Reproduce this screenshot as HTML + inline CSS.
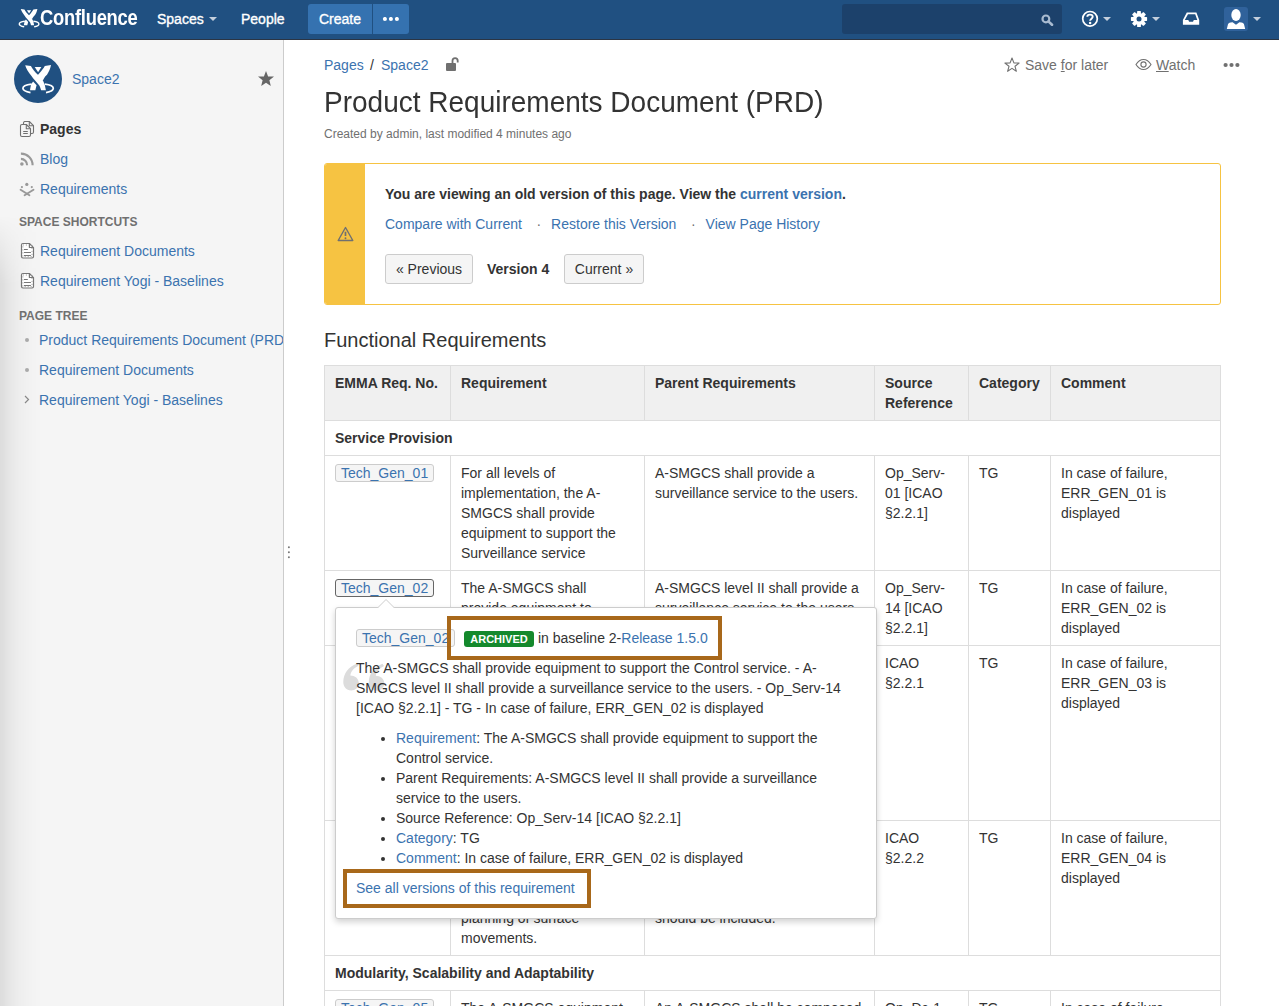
<!DOCTYPE html>
<html><head><meta charset="utf-8">
<style>
*{box-sizing:border-box}
html,body{margin:0;padding:0;width:1279px;height:1006px;overflow:hidden;background:#fff;font-family:"Liberation Sans",sans-serif;font-size:14px;line-height:20px;color:#333}
a{color:#3b73af;text-decoration:none}
.abs{position:absolute}
#hdr{position:absolute;left:0;top:0;width:1279px;height:40px;background:#205081;border-bottom:1px solid #2b3544}
#hdr .nav{position:absolute;top:9px;color:#fff;font-size:14px;line-height:20px;-webkit-text-stroke:0.35px #fff}
#sidebar{position:absolute;left:0;top:40px;width:284px;height:966px;background:#f5f5f5;border-right:1px solid #ccc;overflow:hidden}
#sideshadow{position:absolute;left:0;top:175px;width:42px;height:791px;background:linear-gradient(to right,rgba(0,0,0,0.1) 0,rgba(0,0,0,0.055) 10px,rgba(0,0,0,0.028) 20px,rgba(0,0,0,0.012) 30px,rgba(0,0,0,0) 42px);-webkit-mask-image:linear-gradient(to bottom,transparent,#000 70px)}
.side-item{position:absolute;left:40px;white-space:nowrap}
.side-h{position:absolute;left:19px;font-size:12px;font-weight:bold;color:#707070;line-height:16px}
#main{position:absolute;left:324px;top:40px;width:955px}
table.req{position:absolute;left:324px;top:365px;width:896px;border-collapse:collapse;table-layout:fixed}
table.req td,table.req th{border:1px solid #ddd;padding:7px 10px;vertical-align:top;text-align:left}
table.req th{background:#f0f0f0;font-weight:bold}
.btn{height:30px;border:1px solid #ccc;background:#f5f5f5;border-radius:3px;line-height:28px;text-align:center;color:#333}
.rq{display:inline-block;border:1px solid #ccc;background:#f5f5f5;border-radius:3px;line-height:16px;padding:0 5px;color:#3b73af}
.rq.act{border-color:#666}
</style></head><body>
<div id="hdr">
  <svg class="abs" style="left:0;top:0" width="50" height="40" viewBox="0 0 50 40"><g transform="translate(13.54,2.45) scale(0.645)"><path d="M11.2 10.2 L16.9 11.1 C18.5 14 21 17.5 23.9 19.7 L28.4 24.8 C29.5 26.5 30.3 28.5 30.8 30 L31.9 35.2 L27.1 35.2 C26.4 32.5 25.7 30.8 24.9 29.9 C22 26.5 19.5 24 17.5 21 C14.5 17 12 13.5 11.2 10.2 Z M37 10 C36.3 14 34.8 17 33 19.7 C32 20.5 30.5 22 29 25.3 L23.9 21 L23.4 20.5 L27.1 16.2 C28 15 29.5 13.5 30.8 11.1 Z" fill="#fff"/>
<path d="M19.1 26.4 L22.6 30.3 L21.3 35.2 L16 35.2 L17 29.6 Z" fill="#fff"/>
<path d="M20.7 11.9 L27.4 11.9 L24.1 17.2 Z" fill="#fff"/>
<path d="M17.5 29.2 C11 30 8.9 31.8 8.9 33.3 C8.9 35.2 12 36.8 16.5 37.6" stroke="#fff" stroke-width="2.2" fill="none"/>
<path d="M30.8 29.2 C37 30 39.3 31.8 39.3 33.3 C39.3 35.2 36.5 36.8 32 37.6" stroke="#fff" stroke-width="2.2" fill="none"/></g></svg>
  <div class="abs" style="left:40px;top:4px;font-size:22px;font-weight:bold;color:#fff;line-height:28px;transform:scaleX(0.835);transform-origin:0 0;letter-spacing:-0.3px">Confluence</div>
  <div class="nav" style="left:157px">Spaces</div>
  <svg class="abs" style="left:209px;top:17px" width="8" height="4"><path d="M0 0 L8 0 L4 4Z" fill="#c4cfdd"/></svg>
  <div class="nav" style="left:241px">People</div>
  <div class="abs" style="left:308px;top:4px;width:64px;height:30px;background:#3572b0;border-radius:3px 0 0 3px;color:#fff;text-align:center;line-height:30px;-webkit-text-stroke:0.35px #fff">Create</div>
  <div class="abs" style="left:373px;top:4px;width:36px;height:30px;background:#3572b0;border-radius:0 3px 3px 0">
    <svg class="abs" style="left:9px;top:13px" width="18" height="5"><circle cx="2.9" cy="2" r="2.05" fill="#fff"/><circle cx="8.9" cy="2" r="2.05" fill="#fff"/><circle cx="14.9" cy="2" r="2.05" fill="#fff"/></svg>
  </div>
  <div class="abs" style="left:842px;top:4px;width:220px;height:30px;background:#1c416b;border-radius:3px">
    <svg class="abs" style="left:199px;top:10px" width="13" height="12" viewBox="0 0 13 12"><circle cx="4.9" cy="4.9" r="3.4" stroke="#a9bbd0" stroke-width="2.2" fill="none"/><path d="M7.4 7.4 L11 10.8" stroke="#a9bbd0" stroke-width="2.6" stroke-linecap="round"/></svg>
  </div>
  <svg class="abs" style="left:1081px;top:10px" width="18" height="18" viewBox="0 0 18 18"><circle cx="9" cy="8.8" r="7.3" stroke="#fff" stroke-width="1.7" fill="none"/><path d="M6.3 6.8 C6.3 3.9 11.7 3.9 11.7 6.8 C11.7 8.6 9.1 8.7 9.1 10.8" stroke="#fff" stroke-width="1.9" fill="none"/><circle cx="9.1" cy="13.1" r="1.25" fill="#fff"/></svg>
  <svg class="abs" style="left:1103px;top:17px" width="8" height="4"><path d="M0 0 L8 0 L4 4Z" fill="#c4cfdd"/></svg>
  <svg class="abs" style="left:1130px;top:10px" width="18" height="18" viewBox="0 0 18 18"><g transform="translate(9,9)" fill="#fff"><circle r="6"/><rect x="-1.9" y="-8.1" width="3.8" height="4" rx="0.6" transform="rotate(0)"/><rect x="-1.9" y="-8.1" width="3.8" height="4" rx="0.6" transform="rotate(45)"/><rect x="-1.9" y="-8.1" width="3.8" height="4" rx="0.6" transform="rotate(90)"/><rect x="-1.9" y="-8.1" width="3.8" height="4" rx="0.6" transform="rotate(135)"/><rect x="-1.9" y="-8.1" width="3.8" height="4" rx="0.6" transform="rotate(180)"/><rect x="-1.9" y="-8.1" width="3.8" height="4" rx="0.6" transform="rotate(225)"/><rect x="-1.9" y="-8.1" width="3.8" height="4" rx="0.6" transform="rotate(270)"/><rect x="-1.9" y="-8.1" width="3.8" height="4" rx="0.6" transform="rotate(315)"/></g><circle cx="9" cy="9" r="2.5" fill="#205081"/></svg>
  <svg class="abs" style="left:1152px;top:17px" width="8" height="4"><path d="M0 0 L8 0 L4 4Z" fill="#c4cfdd"/></svg>
  <svg class="abs" style="left:1182px;top:12px" width="18" height="14" viewBox="0 0 18 14"><path d="M4.8 0.6 L14.4 0.6 L17.2 8 L17.2 12.8 L0.9 12.8 L0.9 8 Z M6 2.3 L13.2 2.3 L15.3 8 L11.8 8 L11 9.8 L7.1 9.8 L6.3 8 L2.8 8 Z" fill="#fff" fill-rule="evenodd"/></svg>
  <div class="abs" style="left:1224px;top:7px;width:24px;height:24px;background:#30629b;border-radius:3px;overflow:hidden"><svg class="abs" style="left:0;top:0" width="24" height="24" viewBox="0 0 24 24"><ellipse cx="12" cy="8" rx="4.7" ry="6.1" fill="#fff"/><path d="M2.8 22 L4 17.2 Q4.6 15.6 6.5 15.4 L8.6 15.2 L12 17.8 L15.4 15.2 L17.5 15.4 Q19.4 15.6 20 17.2 L21.2 22 Z" fill="#fff"/></svg></div>
  <svg class="abs" style="left:1253px;top:17px" width="8" height="4"><path d="M0 0 L8 0 L4 4Z" fill="#c4cfdd"/></svg>
</div>
<div id="sidebar">
  <div id="sideshadow"></div>
  <div class="abs" style="left:14px;top:15px;width:48px;height:48px;border-radius:50%;background:#205081">
    <svg class="abs" style="left:0;top:0" width="48" height="48" viewBox="0 0 48 48"><path d="M11.2 10.2 L16.9 11.1 C18.5 14 21 17.5 23.9 19.7 L28.4 24.8 C29.5 26.5 30.3 28.5 30.8 30 L31.9 35.2 L27.1 35.2 C26.4 32.5 25.7 30.8 24.9 29.9 C22 26.5 19.5 24 17.5 21 C14.5 17 12 13.5 11.2 10.2 Z M37 10 C36.3 14 34.8 17 33 19.7 C32 20.5 30.5 22 29 25.3 L23.9 21 L23.4 20.5 L27.1 16.2 C28 15 29.5 13.5 30.8 11.1 Z" fill="#fff"/>
<path d="M19.1 26.4 L22.6 30.3 L21.3 35.2 L16 35.2 L17 29.6 Z" fill="#fff"/>
<path d="M20.7 11.9 L27.4 11.9 L24.1 17.2 Z" fill="#fff"/>
<path d="M17.5 29.2 C11 30 8.9 31.8 8.9 33.3 C8.9 35.2 12 36.8 16.5 37.6" stroke="#fff" stroke-width="1.7" fill="none"/>
<path d="M30.8 29.2 C37 30 39.3 31.8 39.3 33.3 C39.3 35.2 36.5 36.8 32 37.6" stroke="#fff" stroke-width="1.7" fill="none"/></svg>
  </div>
  <a class="abs" style="left:72px;top:29px">Space2</a>
  <svg class="abs" style="left:258px;top:31px" width="16" height="15" viewBox="0 0 16 15"><path d="M8 0.1 L10.1 5.4 L16 5.6 L11.4 9.3 L12.8 15 L8 11.8 L3.2 15 L4.6 9.3 L0 5.6 L5.9 5.4 Z" fill="#666"/></svg>
  <svg class="abs" style="left:19px;top:81px" width="17" height="17" viewBox="0 0 17 17"><g stroke="#707070" stroke-width="1.1" fill="none" stroke-linejoin="round"><path d="M4.5 3.5 L4.5 2 Q4.5 0.5 6 0.5 L10.3 0.5 L14.5 4.7 L14.5 11 Q14.5 12.5 13 12.5 L11.5 12.5"/><path d="M10.3 0.5 L10.3 4.7 L14.5 4.7"/><path d="M3 3.5 L7.3 3.5 L11.5 7.7 L11.5 14 Q11.5 15.5 10 15.5 L3 15.5 Q1.5 15.5 1.5 14 L1.5 5 Q1.5 3.5 3 3.5 Z" fill="#f5f5f5"/><path d="M7.3 3.5 L7.3 7.7 L11.5 7.7"/><path d="M4.2 10.5 L8.8 10.5 M4.2 12.5 L8.8 12.5"/></g></svg>
  <div class="side-item" style="top:79px;font-weight:bold;color:#333">Pages</div>
  <svg class="abs" style="left:20px;top:112px" width="14" height="14" viewBox="0 0 14 14"><circle cx="1.9" cy="12" r="1.8" fill="#999"/><path d="M0.9 6.9 A6.2 6.2 0 0 1 7.1 13.2" stroke="#999" stroke-width="2.1" fill="none"/><path d="M0.9 1.6 A11.5 11.5 0 0 1 12.6 13.3" stroke="#999" stroke-width="2.1" fill="none"/></svg>
  <a class="side-item" style="top:109px">Blog</a>
  <svg class="abs" style="left:19px;top:141px" width="17" height="17" viewBox="0 0 17 17"><circle cx="7.8" cy="3.4" r="1.6" fill="#999"/><circle cx="2.9" cy="6.1" r="1.1" fill="#999"/><circle cx="12.8" cy="6.1" r="1.1" fill="#999"/><path d="M1.6 8.7 L10.4 14.3 M14.5 8.7 L5.6 14.3" stroke="#999" stroke-width="1.9" stroke-linecap="round" fill="none"/></svg>
  <a class="side-item" style="top:139px">Requirements</a>
  <div class="side-h" style="top:174px">SPACE SHORTCUTS</div>
  <svg class="abs" style="left:20px;top:202px" width="16" height="18" viewBox="0 0 16 18"><g fill="none" stroke-linejoin="round"><path d="M2.8 1.5 L9.4 1.5 L13.5 5.6 L13.5 14.6 Q13.5 16 12.1 16 L2.9 16 Q1.5 16 1.5 14.6 L1.5 2.9 Q1.5 1.5 2.8 1.5 Z" stroke="#777" stroke-width="1.2" fill="#fff"/><path d="M2.9 3 L12 3 L12 14.6 L2.9 14.6 Z" stroke="#999" stroke-width="1" stroke-dasharray="1 2"/><path d="M9.4 1.5 L9.4 5.5 L13.5 5.5" stroke="#777" stroke-width="1.2"/><path d="M4 7.5 L7.8 7.5 M4 10.5 L10.9 10.5 M4 13.5 L10.9 13.5" stroke="#777" stroke-width="1.1"/></g></svg>
  <a class="side-item" style="top:201px">Requirement Documents</a>
  <svg class="abs" style="left:20px;top:232px" width="16" height="18" viewBox="0 0 16 18"><g fill="none" stroke-linejoin="round"><path d="M2.8 1.5 L9.4 1.5 L13.5 5.6 L13.5 14.6 Q13.5 16 12.1 16 L2.9 16 Q1.5 16 1.5 14.6 L1.5 2.9 Q1.5 1.5 2.8 1.5 Z" stroke="#777" stroke-width="1.2" fill="#fff"/><path d="M2.9 3 L12 3 L12 14.6 L2.9 14.6 Z" stroke="#999" stroke-width="1" stroke-dasharray="1 2"/><path d="M9.4 1.5 L9.4 5.5 L13.5 5.5" stroke="#777" stroke-width="1.2"/><path d="M4 7.5 L7.8 7.5 M4 10.5 L10.9 10.5 M4 13.5 L10.9 13.5" stroke="#777" stroke-width="1.1"/></g></svg>
  <a class="side-item" style="top:231px">Requirement Yogi - Baselines</a>
  <div class="side-h" style="top:268px">PAGE TREE</div>
  <div class="abs" style="left:25px;top:298px;width:4px;height:4px;border-radius:50%;background:#aaa"></div>
  <a class="side-item" style="top:290px;left:39px">Product Requirements Document (PRD)</a>
  <div class="abs" style="left:25px;top:328px;width:4px;height:4px;border-radius:50%;background:#aaa"></div>
  <a class="side-item" style="top:320px;left:39px">Requirement Documents</a>
  <svg class="abs" style="left:24px;top:355px" width="6" height="9"><path d="M1 1 L4.5 4.5 L1 8" stroke="#888" stroke-width="1.2" fill="none"/></svg>
  <a class="side-item" style="top:350px;left:39px">Requirement Yogi - Baselines</a>
</div>
<svg class="abs" style="left:287px;top:545px" width="4" height="15"><circle cx="1.9" cy="2.3" r="1" fill="#777"/><circle cx="1.9" cy="7.3" r="1" fill="#777"/><circle cx="1.9" cy="12.3" r="1" fill="#777"/></svg>

<a class="abs" style="left:324px;top:55px">Pages</a>
<span class="abs" style="left:370px;top:55px">/</span>
<a class="abs" style="left:381px;top:55px">Space2</a>

<h1 class="abs" style="margin:0;left:324px;top:86px;font-size:28px;line-height:32px;font-weight:normal;color:#333;transform:scaleY(1.06);transform-origin:0 5.6px">Product Requirements Document (PRD)</h1>
<div class="abs" style="left:324px;top:126px;font-size:12px;line-height:16px;color:#707070">Created by admin, last modified 4 minutes ago</div>

<svg class="abs" style="left:445px;top:56px" width="14" height="16" viewBox="0 0 14 16"><path d="M7.5 7.5 L7.5 4.8 A2.6 2.6 0 0 1 12.7 4.8 L12.7 6.5" stroke="#707070" stroke-width="1.8" fill="none"/><rect x="1" y="7" width="10" height="8" rx="1" fill="#707070"/></svg>

<svg class="abs" style="left:1004px;top:57px" width="16" height="15" viewBox="0 0 16 15"><path d="M8 1 L9.9 5.9 L15.1 6.1 L11 9.3 L12.4 14.3 L8 11.4 L3.6 14.3 L5 9.3 L0.9 6.1 L6.1 5.9 Z" stroke="#707070" stroke-width="1.1" fill="none" stroke-linejoin="round"/></svg>
<span class="abs" style="left:1025px;top:55px;color:#707070;white-space:nowrap">Save <span style="text-decoration:underline">f</span>or later</span>
<svg class="abs" style="left:1135px;top:58px" width="17" height="13" viewBox="0 0 17 13"><path d="M1 6.5 C3.5 2.5 6 1.5 8.5 1.5 C11 1.5 13.5 2.5 16 6.5 C13.5 10.5 11 11.5 8.5 11.5 C6 11.5 3.5 10.5 1 6.5 Z" stroke="#707070" stroke-width="1.1" fill="none"/><circle cx="8.5" cy="6.5" r="2.6" stroke="#707070" stroke-width="1.1" fill="none"/></svg>
<span class="abs" style="left:1156px;top:55px;color:#707070;white-space:nowrap"><span style="text-decoration:underline">W</span>atch</span>
<svg class="abs" style="left:1223px;top:62px" width="17" height="6"><circle cx="2.6" cy="3" r="2.1" fill="#707070"/><circle cx="8.5" cy="3" r="2.1" fill="#707070"/><circle cx="14.4" cy="3" r="2.1" fill="#707070"/></svg>

<div class="abs" style="left:324px;top:163px;width:897px;height:142px;border:1px solid #f6c342;border-radius:3px;overflow:hidden">
  <div class="abs" style="left:0;top:0;width:40px;height:140px;background:#f6c342"></div>
  <svg class="abs" style="left:12px;top:62px" width="17" height="16" viewBox="0 0 17 16"><path d="M8.5 1.5 L15.8 14.5 L1.2 14.5 Z" stroke="#707070" stroke-width="1.4" fill="none" stroke-linejoin="round"/><path d="M8.5 5.8 L8.5 10" stroke="#707070" stroke-width="1.7"/><circle cx="8.5" cy="12.2" r="0.95" fill="#707070"/></svg>
  <div class="abs" style="left:60px;top:20px;font-weight:bold;white-space:nowrap">You are viewing an old version of this page. View the <a>current version</a>.</div>
  <div class="abs" style="left:60px;top:50px;white-space:nowrap"><a>Compare with Current</a><span style="margin:0 10px 0 14.5px;color:#707070">&middot;</span><a>Restore this Version</a><span style="margin:0 10px 0 14.5px;color:#707070">&middot;</span><a>View Page History</a></div>
  <div class="abs btn" style="left:60px;top:90px;width:88px">&laquo; Previous</div>
  <div class="abs" style="left:162px;top:95px;font-weight:bold">Version 4</div>
  <div class="abs btn" style="left:239px;top:90px;width:80px">Current &raquo;</div>
</div>

<h2 class="abs" style="margin:0;left:324px;top:325.5px;font-size:20px;line-height:28px;font-weight:normal;color:#333">Functional Requirements</h2>


<table class="req">
<colgroup><col style="width:126px"><col style="width:194px"><col style="width:230px"><col style="width:94px"><col style="width:82px"><col style="width:170px"></colgroup>
<tr><th>EMMA Req. No.</th><th>Requirement</th><th>Parent Requirements</th><th>Source<br>Reference</th><th>Category</th><th>Comment</th></tr>
<tr><td colspan="6" style="font-weight:bold">Service Provision</td></tr>
<tr><td><span class="rq">Tech_Gen_01</span></td><td>For all levels of<br>implementation, the A-<br>SMGCS shall provide<br>equipment to support the<br>Surveillance service</td><td>A-SMGCS shall provide a<br>surveillance service to the users.</td><td>Op_Serv-<br>01 [ICAO<br>&sect;2.2.1]</td><td>TG</td><td>In case of failure,<br>ERR_GEN_01 is<br>displayed</td></tr>
<tr><td><span class="rq act">Tech_Gen_02</span></td><td>The A-SMGCS shall<br>provide equipment to<br>support the Control service.</td><td>A-SMGCS level II shall provide a<br>surveillance service to the users.</td><td>Op_Serv-<br>14 [ICAO<br>&sect;2.2.1]</td><td>TG</td><td>In case of failure,<br>ERR_GEN_02 is<br>displayed</td></tr>
<tr><td><span class="rq">Tech_Gen_03</span></td><td>The A-SMGCS shall<br>provide equipment to<br>support the Guidance<br>service.<br>&nbsp;<br>&nbsp;<br>&nbsp;<br>&nbsp;</td><td>A-SMGCS shall provide<br>guidance to the users.</td><td>ICAO<br>&sect;2.2.1</td><td>TG</td><td>In case of failure,<br>ERR_GEN_03 is<br>displayed</td></tr>
<tr><td><span class="rq">Tech_Gen_04</span></td><td>The A-SMGCS shall<br>provide equipment to<br>support the Planning<br>service for the<br>planning of surface<br>movements.</td><td>A-SMGCS shall provide a<br>planning service to the<br>users. Automated<br>planning functions<br>should be included.</td><td>ICAO<br>&sect;2.2.2</td><td>TG</td><td>In case of failure,<br>ERR_GEN_04 is<br>displayed</td></tr>
<tr><td colspan="6" style="font-weight:bold">Modularity, Scalability and Adaptability</td></tr>
<tr><td><span class="rq">Tech_Gen_05</span></td><td>The A-SMGCS equipment<br>shall be modular.</td><td>An A-SMGCS shall be composed<br>of modules.</td><td>Op_Dc-1<br>[ICAO]</td><td>TG</td><td>In case of failure,<br>ERR_GEN_05 is<br>displayed</td></tr>
</table>


<div id="popup" class="abs" style="left:335px;top:607px;width:542px;height:312px;background:#fff;border:1px solid #ccc;border-radius:3px;box-shadow:0 3px 6px rgba(0,0,0,0.18)">
  <svg class="abs" style="left:41px;top:-9px" width="18" height="10" viewBox="0 0 18 10"><path d="M0 9.5 L9 0.5 L18 9.5" fill="#fff" stroke="#ccc" stroke-width="1"/><rect x="0" y="9" width="18" height="2" fill="#fff"/></svg>
  <div class="abs" style="left:0px;top:0px;width:540px">
    <span class="abs rq" style="left:20px;top:21px;">Tech_Gen_02</span>
    <span class="abs" style="left:128px;top:23px;width:70px;height:16px;background:#14892c;border-radius:3px;color:#fff;font-size:11px;font-weight:bold;line-height:16px;text-align:center">ARCHIVED</span>
    <span class="abs" style="left:202px;top:20px;white-space:nowrap">in baseline 2-<a>Release 1.5.0</a></span>
    <div class="abs" style="left:111px;top:8px;width:275px;height:43.5px;border:4px solid #a8681a"></div>
    <svg class="abs" style="left:7px;top:55px" width="44" height="30" viewBox="0 0 44 30"><g fill="#dcdcdc"><path id="q6" d="M14 0.5 L15.5 2.8 C10.5 5 8 8.5 7.3 12.5 C11.8 12.5 15.8 15.5 15.8 20 C15.8 24.5 12.3 27.5 8.2 27.5 C3.3 27.5 0.3 23.5 0.3 19 C0.3 11 5 4 14 0.5 Z"/><path transform="translate(25.5,0.3)" d="M14 0.5 L15.5 2.8 C10.5 5 8 8.5 7.3 12.5 C11.8 12.5 15.8 15.5 15.8 20 C15.8 24.5 12.3 27.5 8.2 27.5 C3.3 27.5 0.3 23.5 0.3 19 C0.3 11 5 4 14 0.5 Z"/></g></svg>
    <div class="abs" style="left:20px;top:50px;white-space:nowrap;line-height:20px">The A-SMGCS shall provide equipment to support the Control service. - A-<br>SMGCS level II shall provide a surveillance service to the users. - Op_Serv-14<br>[ICAO &sect;2.2.1] - TG - In case of failure, ERR_GEN_02 is displayed</div>
    <ul class="abs" style="left:20px;top:120px;margin:0;padding:0 0 0 40px;white-space:nowrap;line-height:20px">
      <li><a>Requirement</a>: The A-SMGCS shall provide equipment to support the<br>Control service.</li>
      <li>Parent Requirements: A-SMGCS level II shall provide a surveillance<br>service to the users.</li>
      <li>Source Reference: Op_Serv-14 [ICAO &sect;2.2.1]</li>
      <li><a>Category</a>: TG</li>
      <li><a>Comment</a>: In case of failure, ERR_GEN_02 is displayed</li>
    </ul>
    <a class="abs" style="left:20px;top:270px;white-space:nowrap">See all versions of this requirement</a>
    <div class="abs" style="left:7px;top:261px;width:248px;height:39px;border:4px solid #a8681a"></div>
  </div>
</div>

</body></html>
